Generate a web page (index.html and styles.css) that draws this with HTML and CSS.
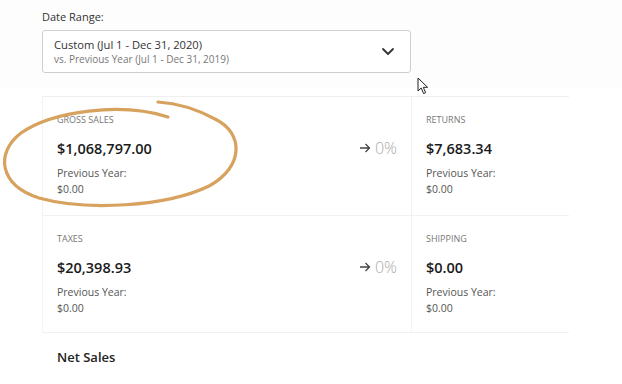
FILE: index.html
```html
<!DOCTYPE html>
<html lang="en">
<head>
    <meta charset="UTF-8" />
    <title>Sales Overview</title>
    <link rel="stylesheet" href="styles.css">
</head>
<body>
<div class="page">
    <div class="range">
        <label class="range_label">Date Range:</label>
        <div class="range_select">
            <div class="range_text">
                <p class="range_main">Custom (Jul 1 - Dec 31, 2020)</p>
                <p class="range_sub">vs. Previous Year (Jul 1 - Dec 31, 2019)</p>
            </div>
            <svg class="chevron" width="14" height="9" viewBox="0 0 14 9">
                <path d="M2 2 L7 7 L12 2" fill="none" stroke="#333" stroke-width="1.8" stroke-linecap="round" stroke-linejoin="round"/>
            </svg>
        </div>
        <svg class="cursor" width="14" height="18" viewBox="0 0 14 18">
            <path d="M1 1 L1 14 L4.2 11 L6.6 16.6 L8.6 15.7 L6.3 10.3 L10.6 10.3 Z" fill="#fff" stroke="#222" stroke-width="1" stroke-linejoin="round"/>
        </svg>
    </div>

    <div class="stats">
        <div class="cell">
            <div class="cell_info">
                <h3>Gross Sales</h3>
                <div class="value">$1,068,797.00</div>
                <p class="prev">Previous Year:<br>$0.00</p>
            </div>
            <div class="change">
                <svg class="arrow" width="12" height="10" viewBox="0 0 12 10">
                    <path d="M1 5 H10.5 M6.5 1 L10.5 5 L6.5 9" fill="none" stroke="#444" stroke-width="1.3"/>
                </svg>
                0%
            </div>
        </div>
        <div class="cell cell_r">
            <div class="cell_info">
                <h3>Returns</h3>
                <div class="value">$7,683.34</div>
                <p class="prev">Previous Year:<br>$0.00</p>
            </div>
        </div>
        <div class="cell">
            <div class="cell_info">
                <h3>Taxes</h3>
                <div class="value">$20,398.93</div>
                <p class="prev">Previous Year:<br>$0.00</p>
            </div>
            <div class="change">
                <svg class="arrow" width="12" height="10" viewBox="0 0 12 10">
                    <path d="M1 5 H10.5 M6.5 1 L10.5 5 L6.5 9" fill="none" stroke="#444" stroke-width="1.3"/>
                </svg>
                0%
            </div>
        </div>
        <div class="cell cell_r">
            <div class="cell_info">
                <h3>Shipping</h3>
                <div class="value">$0.00</div>
                <p class="prev">Previous Year:<br>$0.00</p>
            </div>
        </div>
        <svg class="circle" width="250" height="120" viewBox="0 0 250 120">
            <path d="M167 20 C120 5, 52 14, 20 36 C-6 56, -2 88, 38 101 C85 114, 165 110, 208 89 C243 70, 243 36, 214 22 C192 10, 172 6, 157 5" fill="none" stroke="#d7a15e" stroke-width="3.2" stroke-linecap="round"/>
        </svg>
    </div>

    <h2 class="net">Net Sales</h2>
</div>
</body>
</html>
```

FILE: styles.css
```css
html, body{
    margin: 0;
    padding: 0;
    background: #fff;
}
body{
    font-family: "Open Sans", "Noto Sans", sans-serif;
    color: #222;
}
p, h2, h3{
    margin: 0;
}
.page{
    width: 622px;
    height: 384px;
    overflow: hidden;
    background: #fff;
}

.range{
    position: relative;
    padding: 9px 0 0 42px;
    height: 87px;
    box-sizing: border-box;
    background: #fdfdfd;
}
.range_label{
    display: block;
    font-size: 11px;
    line-height: 15px;
    color: #333;
}
.range_select{
    margin-top: 6px;
    width: 369px;
    height: 43px;
    box-sizing: border-box;
    border: 1px solid #cfcfcf;
    border-radius: 3px;
    background: #fff;
    display: flex;
    align-items: center;
    justify-content: space-between;
    padding: 0 15px 0 11px;
}
.range_main{
    font-size: 11.2px;
    line-height: 14px;
    color: #333;
}
.range_sub{
    font-size: 10px;
    line-height: 14px;
    color: #777;
}
.chevron{
    display: block;
}
.cursor{
    position: absolute;
    left: 417px;
    top: 77px;
}

.stats{
    position: relative;
    margin: 9px 0 0 42px;
    width: 526px;
    display: grid;
    grid-template-columns: 369px 157px;
    grid-template-rows: 119px 117px;
    border-top: 1px solid #efefef;
    border-left: 1px solid #f3f3f3;
}
.cell{
    display: flex;
    justify-content: space-between;
    align-items: flex-start;
    padding: 17px 14px 0 14px;
    border-bottom: 1px solid #f1f1f1;
    border-right: 1px solid #f3f3f3;
}
.cell_r{
    border-right: none;
}
.cell h3{
    font-size: 9px;
    font-weight: 400;
    text-transform: uppercase;
    color: #777;
    line-height: 12px;
}
.value{
    margin-top: 13px;
    font-size: 14.5px;
    font-weight: 600;
    line-height: 20px;
    color: #1a1a1a;
}
.prev{
    margin-top: 6px;
    font-size: 10.5px;
    line-height: 16px;
    color: #555;
}
.change{
    display: flex;
    align-items: center;
    gap: 4px;
    margin-top: 24px;
    margin-right: 0;
    font-size: 16px;
    font-weight: 300;
    line-height: 20px;
    color: #aaa;
}
.arrow{
    display: block;
}
.circle{
    position: absolute;
    left: -42px;
    top: 0;
}

.net{
    margin: 15px 0 0 57px;
    font-size: 13px;
    font-weight: 600;
    color: #222;
}
```
